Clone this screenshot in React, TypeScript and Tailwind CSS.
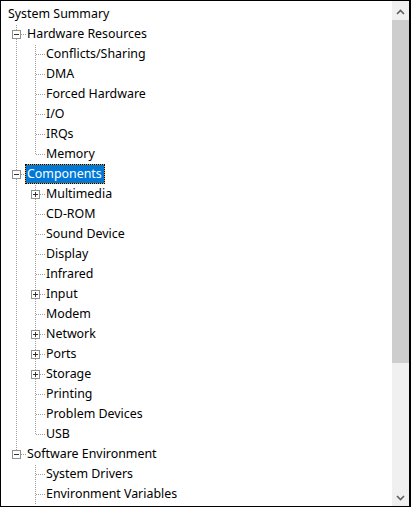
import React from "react";

type Node = { label: string; children?: Node[]; expanded?: boolean; selected?: boolean; collapsed?: boolean; more?: boolean };

const tree: Node = {
  label: "System Summary",
  expanded: true,
  children: [
    {
      label: "Hardware Resources",
      expanded: true,
      children: [
        { label: "Conflicts/Sharing" },
        { label: "DMA" },
        { label: "Forced Hardware" },
        { label: "I/O" },
        { label: "IRQs" },
        { label: "Memory" },
      ],
    },
    {
      label: "Components",
      expanded: true,
      selected: true,
      children: [
        { label: "Multimedia", collapsed: true },
        { label: "CD-ROM" },
        { label: "Sound Device" },
        { label: "Display" },
        { label: "Infrared" },
        { label: "Input", collapsed: true },
        { label: "Modem" },
        { label: "Network", collapsed: true },
        { label: "Ports", collapsed: true },
        { label: "Storage", collapsed: true },
        { label: "Printing" },
        { label: "Problem Devices" },
        { label: "USB" },
      ],
    },
    {
      label: "Software Environment",
      expanded: true,
      more: true,
      children: [{ label: "System Drivers" }, { label: "Environment Variables" }],
    },
  ],
};

type Row = { label: string; depth: number; conts: boolean[]; last: boolean; box: null | "+" | "-"; selected: boolean };

function flatten(n: Node, depth: number, conts: boolean[], last: boolean, out: Row[]) {
  const box = n.collapsed ? "+" : n.expanded && depth > 0 ? "-" : null;
  out.push({ label: n.label, depth, conts, last, box, selected: !!n.selected });
  if (n.expanded && n.children) {
    n.children.forEach((c, i) => {
      const isLast = i === n.children!.length - 1 && !n.more;
      flatten(c, depth + 1, depth > 0 ? [...conts, !last] : conts, isLast, out);
    });
  }
}

const rows: Row[] = [];
flatten(tree, 0, [], true, rows);

const DOT = "#a0a0a0";

function Vert({ from, to }: { from: number; to: number }) {
  const r = [];
  for (let y = from; y < to; y++) if (y % 2 === 1) r.push(<rect key={y} x={9} y={y} width={1} height={1} fill={DOT} />);
  return <>{r}</>;
}

function GuideCell({ kind, last, box }: { kind: "cont" | "empty" | "own"; last?: boolean; box?: null | "+" | "-" }) {
  const parts: React.ReactNode[] = [];
  if (kind === "cont") parts.push(<Vert key="v" from={0} to={20} />);
  if (kind === "own") {
    parts.push(<Vert key="vt" from={0} to={10} />);
    if (!last) parts.push(<Vert key="vb" from={10} to={20} />);
    const h = [];
    for (let x = 10; x <= 18; x += 2) h.push(<rect key={"h" + x} x={x} y={10} width={1} height={1} fill={DOT} />);
    parts.push(<g key="h">{h}</g>);
    if (box) {
      parts.push(
        <g key="box">
          <rect x={5.5} y={6.5} width={8} height={8} fill="#ffffff" stroke="#919191" strokeWidth={1} />
          <rect x={7} y={10} width={5} height={1} fill="#333333" />
          {box === "+" && <rect x={9} y={8} width={1} height={5} fill="#333333" />}
        </g>
      );
    }
  }
  return (
    <svg width={19} height={20} viewBox="0 0 19 20" shapeRendering="crispEdges" className="shrink-0 block">
      {parts}
    </svg>
  );
}

function TreeRow({ row }: { row: Row }) {
  const cells: React.ReactNode[] = [];
  for (let k = 1; k <= row.depth; k++) {
    if (k < row.depth) {
      cells.push(<GuideCell key={k} kind={row.conts[k - 1] ? "cont" : "empty"} />);
    } else {
      cells.push(<GuideCell key={k} kind="own" last={row.last} box={row.box} />);
    }
  }
  return (
    <div className="flex h-[20px] items-center whitespace-nowrap">
      {cells}
      {row.selected ? (
        <span className="ml-[-1px] h-[20px] border border-dotted border-black bg-[#f0a030]">
          <span className="block h-[18px] bg-[#0078d7] px-[1px] pr-[2px] leading-[18px] text-white">{row.label}</span>
        </span>
      ) : (
        <span className="ml-[-1px] h-[20px] border border-transparent px-[1px] leading-[18px] text-black">{row.label}</span>
      )}
    </div>
  );
}

function Chevron({ up }: { up?: boolean }) {
  return (
    <svg width={9} height={6} viewBox="0 0 9 6" className="block">
      <path d={up ? "M1 5 L4.5 1.5 L8 5" : "M1 1 L4.5 4.5 L8 1"} fill="none" stroke="#606060" strokeWidth={1.6} />
    </svg>
  );
}

export default function App() {
  return (
    <div className="flex h-[507px] w-[411px] overflow-hidden border-t border-b border-l border-r-2 border-black bg-white font-['Noto_Sans',sans-serif] text-[12.4px]">
      <div className="min-w-0 flex-1 overflow-hidden pl-[6px] pt-[3px]">
        {rows.map((r, i) => (
          <TreeRow key={i} row={r} />
        ))}
      </div>
      <div className="flex w-[17px] shrink-0 flex-col bg-[#f0f0f0]">
        <div className="flex h-[19px] shrink-0 items-center justify-center pt-[2px]">
          <Chevron up />
        </div>
        <div className="h-[343px] shrink-0 bg-[#cdcdcd]" />
        <div className="flex-1" />
        <div className="flex h-[17px] shrink-0 items-center justify-center">
          <Chevron />
        </div>
      </div>
    </div>
  );
}
